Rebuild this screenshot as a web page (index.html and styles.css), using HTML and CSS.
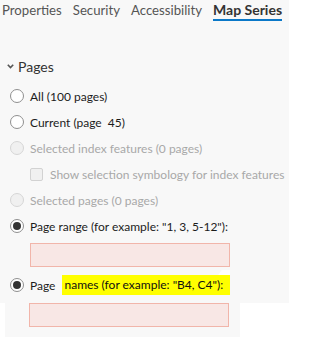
FILE: index.html
```html
<!DOCTYPE html>
<html lang="en">
<head>
  <meta charset="UTF-8">
  <title>Map Series</title>
  <link rel="stylesheet" href="styles.css">
</head>
<body>
  <div class="panel">
    <!-- tabs -->
    <div class="tabs">
      <span class="tab">Properties</span>
      <span class="tab">Security</span>
      <span class="tab">Accessibility</span>
      <span class="tab active">Map Series</span>
    </div>

    <div class="section-head">
      <svg class="chevron" width="7" height="5" viewBox="0 0 7 5"><path d="M0.8 0.8 L3.5 3.6 L6.2 0.8" fill="none" stroke="#555" stroke-width="1.6"/></svg>
      <span>Pages</span>
    </div>

    <div class="row"><span class="radio"></span><span>All (100 pages)</span></div>
    <div class="row"><span class="radio"></span><span>Current (page&nbsp; 45)</span></div>
    <div class="row disabled"><span class="radio"></span><span>Selected index features (0 pages)</span></div>
    <div class="row sub disabled"><span class="check"></span><span>Show selection symbology for index features</span></div>
    <div class="row disabled"><span class="radio"></span><span>Selected pages (0 pages)</span></div>
    <div class="row"><span class="radio on"></span><span>Page range (for example: "1, 3, 5-12"):</span></div>
    <div class="field"></div>
    <div class="row names"><span class="radio on"></span><span>Page</span><span class="mark">names (for example: "B4, C4"):</span></div>
  </div>
  <div class="tail">
    <div class="field"></div>
  </div>
</body>
</html>
```
FILE: styles.css
```css
* {
  margin: 0;
  padding: 0;
  box-sizing: border-box;
}
body {
  background: #fff;
  font-family: Lato, "Open Sans", sans-serif;
  color: #1c1c1c;
  white-space: nowrap;
}
.panel {
  width: 289px;
  height: 303px;
  background: #f8f8f8;
}
.tabs {
  display: flex;
  align-items: baseline;
  gap: 11px;
  padding-left: 2px;
  height: 21px;
  font-size: 13.2px;
}
.tab {
  color: #555;
  line-height: 19px;
  height: 21px;
}
.tab.active {
  color: #333;
  font-size: 14px;
  font-weight: 700;
  border-bottom: 2px solid #0a78c8;
}
.section-head {
  display: flex;
  align-items: center;
  gap: 4px;
  padding-left: 7px;
  margin-top: 36px;
  height: 18px;
  font-size: 14px;
  color: #333;
}
.row {
  display: flex;
  align-items: center;
  gap: 6px;
  height: 26px;
  padding-left: 10px;
  font-size: 12px;
}
.section-head + .row {
  margin-top: 8px;
}
.radio {
  width: 14px;
  height: 14px;
  border-radius: 50%;
  border: 1px solid #8f8f8f;
  background: #fff;
  position: relative;
  flex: none;
}
.radio.on::after {
  content: "";
  position: absolute;
  left: 2px;
  top: 2px;
  width: 8px;
  height: 8px;
  border-radius: 50%;
  background: #333;
}
.disabled {
  color: #a8a8a8;
}
.disabled .radio {
  border-color: #d6d6d6;
  background: #f0f0f0;
}
.check {
  width: 13px;
  height: 13px;
  border: 1px solid #d2d2d2;
  border-radius: 2px;
  background: #f0f0f0;
  flex: none;
}
.row.sub {
  padding-left: 30px;
  gap: 7px;
}
.field {
  margin: 4px 0 0 30px;
  width: 200px;
  height: 24px;
  background: #f8e7e5;
  border: 1px solid #f1b5aa;
}
.row.names {
  margin-top: 5px;
  gap: 0;
}
.row.names .radio {
  margin-right: 6px;
}
.mark {
  position: relative;
  background: #ffff00;
  margin-left: 7px;
  padding: 2px 7px 3px 2px;
  color: #111;
}
/* white notch from the screenshot paste */
.mark::after {
  content: "";
  position: absolute;
  right: 0;
  top: -5px;
  width: 12px;
  height: 5px;
  background: #fff;
  clip-path: polygon(30% 0, 100% 0, 100% 100%, 0 100%);
}
.tail {
  margin-left: 5px;
  width: 235px;
  height: 34px;
  background: #f8f8f8;
}
.tail .field {
  margin: 0 0 0 24px;
}
```
